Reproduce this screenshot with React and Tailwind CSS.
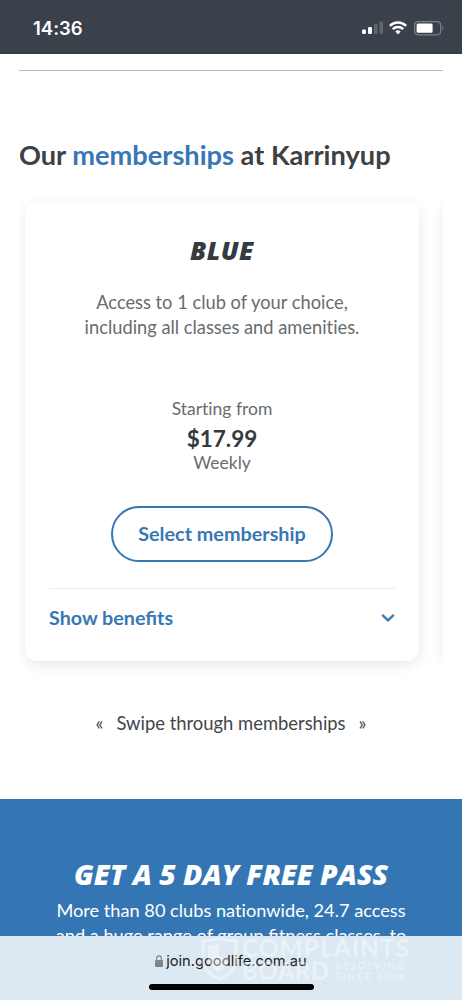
import React from 'react';

const SignalIcon = () => (
  <svg width="22" height="14" viewBox="0 0 22 14" fill="#fff">
    <rect x="0" y="8.5" width="4" height="4.5" rx="1.2" />
    <rect x="6" y="6" width="4" height="7" rx="1.2" />
    <rect x="12" y="3" width="3.5" height="10" rx="1" opacity=".2" />
    <rect x="17.5" y="0.5" width="3.5" height="12.5" rx="1" opacity=".2" />
  </svg>
);

const WifiIcon = () => (
  <svg width="18" height="14" viewBox="0 0 18 14" fill="none" stroke="#fff" strokeWidth="2.4">
    <path d="M.9 4.9a11.5 11.5 0 0 1 16.2 0" />
    <path d="M3.8 8.1a7.4 7.4 0 0 1 10.4 0" />
    <path d="M6.3 10.5a3.9 3.9 0 0 1 5.4 0L9 13.4z" fill="#fff" stroke="none" />
  </svg>
);

const BatteryIcon = () => (
  <svg width="31" height="15" viewBox="0 0 31 15">
    <rect x="0.6" y="0.6" width="26" height="13.2" rx="3.5" fill="none" stroke="#7b8188" strokeWidth="1.2" />
    <rect x="2.6" y="2.6" width="16" height="9.2" rx="1.5" fill="#fff" />
    <path d="M28.2 5v4.4c1.7-.7 1.7-3.7 0-4.4z" fill="#7b8188" />
  </svg>
);

const StatusBar = () => (
  <div className="flex h-[54px] items-center justify-between border-b border-[#33373f] bg-[#3a414b] pl-[33px] pr-[17px] pt-[3px]">
    <span className="pt-px font-['Inter',sans-serif] text-[18.5px] font-semibold text-white">14:36</span>
    <div className="flex items-center">
      <SignalIcon />
      <span className="ml-[5px] mr-[7px]"><WifiIcon /></span>
      <BatteryIcon />
    </div>
  </div>
);

const MembershipCard = () => (
  <div className="ml-[6px] h-[460px] w-[394px] shrink-0 rounded-xl bg-white px-6 text-center shadow-[0_4px_14px_rgba(0,0,0,0.09)]">
    <h3 className="pt-[33px] font-['Open_Sans',sans-serif] text-[25.5px] font-extrabold italic leading-8 tracking-[0.5px] text-[#333b40]">BLUE</h3>
    <p className="mt-6 text-[18.3px] leading-[25px] text-[#686c6e]">
      Access to 1 club of your choice,<br />including all classes and amenities.
    </p>
    <div className="mt-[57px] text-[17.5px] leading-6 text-[#686c6e]">
      <div>Starting from</div>
      <div className="text-[22.5px] font-bold leading-9 text-[#333b40]">$17.99</div>
      <div className="-mt-1.5">Weekly</div>
    </div>
    <button className="mt-[31px] h-[56px] w-[222px] rounded-full border-2 border-[#3777af] pb-px text-[19.8px] font-bold text-[#3777b4]">
      Select membership
    </button>
    <div className="mt-[26px] flex items-center justify-between border-t border-[#ececec] pt-[14px] text-[19.7px] font-bold leading-[30px] text-[#3777b4]">
      <span className="[font-variant-ligatures:normal]">Show benefits</span>
      <svg width="14" height="10" viewBox="0 0 14 10" fill="none" stroke="currentColor" strokeWidth="2.3">
        <path d="M1.2 1.8 7 7.4l5.8-5.6" />
      </svg>
    </div>
  </div>
);

const Memberships = () => (
  <section className="h-[745px] pt-4">
    <div className="mx-[19px] border-t border-[#b9bbbd]" />
    <h2 className="ml-[19px] mt-[66px] whitespace-nowrap text-[27.2px] font-bold leading-9 text-[#3b4144]">
      Our <span className="text-[#3777b4]">memberships</span> at Karrinyup
    </h2>
    <div className="mx-[19px] mt-[14px] flex h-[500px] overflow-hidden pt-[14px]">
      <MembershipCard />
      <div className="ml-[24px] h-[460px] w-[394px] shrink-0 rounded-xl bg-white shadow-[0_4px_14px_rgba(0,0,0,0.09)]" />
    </div>
    <div className="mt-6 flex items-center justify-center gap-[13px] text-[18.4px] leading-6 text-[#42464b]">
      <span>«</span>
      <span>Swipe through memberships</span>
      <span>»</span>
    </div>
  </section>
);

const FreePass = () => (
  <section className="h-[201px] bg-[#3476b3] pt-[57px] text-center text-white">
    <h2 className="font-['Open_Sans',sans-serif] text-[28.4px] font-extrabold italic leading-9">GET A 5 DAY FREE PASS</h2>
    <p className="mt-[6px] text-[18.2px] leading-[25px]">
      More than 80 clubs nationwide, 24.7 access<br />and a huge range of group <span className="[font-variant-ligatures:normal]">fitness</span> classes, to
    </p>
  </section>
);

const Watermark = () => (
  <div className="absolute left-[201px] top-[936px] flex items-start text-white opacity-40">
    <svg width="37" height="46" viewBox="0 0 37 46" fill="none" stroke="currentColor" strokeWidth="3">
      <path d="M2 5c6 0 12-1 16.500-3C23 4 29 5 35 5v18c0 9-7 16-16.500 20C9 39 2 32 2 23z" />
      <path d="M7 9c5 0 8-1 11-2v13l10 3c-1 6-5 10-10 13C12 33 7 28 7 21z" fill="currentColor" stroke="none" />
    </svg>
    <div className="ml-1 font-bold leading-[23px]">
      <div className="text-[24.5px] tracking-[1px]">COMPLAINTS</div>
      <div className="flex items-center">
        <span className="text-[24px] tracking-[0.500px]">BOARD</span>
        <span className="ml-1.5 text-[9.500px] leading-[11px] tracking-[2px]">RESOLVING<br />SINCE 2004</span>
      </div>
    </div>
  </div>
);

const BrowserBar = () => (
  <div className="absolute inset-x-0 top-[936px] h-16 bg-[#dce9f2]">
    <div className="flex items-center justify-center pt-[13px] font-['Inter',sans-serif] text-[14.7px] leading-6 text-[#1c2125]">
      <svg width="8" height="12" viewBox="0 0 8 12" fill="#7e868b" className="mr-[3px]">
        <rect y="5" width="8" height="7" rx="1" />
        <path d="M1.700 5V3.200a2.300 2.300 0 0 1 4.600 0V5" fill="none" stroke="#7e868b" strokeWidth="1.200" />
      </svg>
      join.goodlife.com.au
    </div>
    <div className="mx-auto mt-[11px] h-[6px] w-[165px] rounded-full bg-black" />
  </div>
);

const App = () => (
  <div className="relative h-[1000px] w-[462px] overflow-hidden bg-white font-['Lato',sans-serif] [font-variant-ligatures:none]">
    <StatusBar />
    <Memberships />
    <FreePass />
    <BrowserBar />
    <Watermark />
  </div>
);

export default App;
